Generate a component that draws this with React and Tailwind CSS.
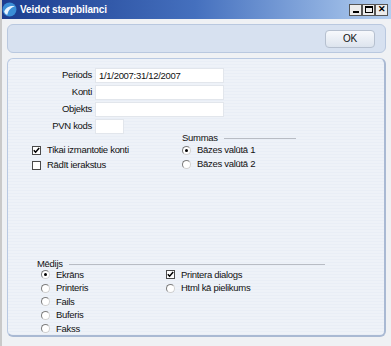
import React from 'react';

const font = { fontFamily: '"Liberation Sans", Arial, sans-serif' };

const Radio = ({ checked }) => (
  <span className="relative inline-block w-[9px] h-[9px] rounded-full bg-white border border-t-[#7d7d7d] border-l-[#7d7d7d] border-b-[#d0d0d0] border-r-[#d0d0d0] shrink-0">
    {checked && <span className="absolute left-[2px] top-[2px] w-[3px] h-[3px] rounded-full bg-black" />}
  </span>
);

const Check = ({ checked }) => (
  <span className="relative inline-flex items-center justify-center w-[9px] h-[9px] bg-white border border-[#4a4a4a] shrink-0">
    {checked && (
      <svg width="7" height="7" viewBox="0 0 7 7">
        <path d="M0.8 3.2 L2.6 5.2 L6.2 1" stroke="#000" strokeWidth="1.5" fill="none" />
      </svg>
    )}
  </span>
);

const Field = ({ label, value, width = 'w-[129px]' }) => (
  <div className="flex items-center h-[17px]">
    <div className="w-[87px] pr-[3px] text-right">{label}</div>
    <div className={`${width} h-[15px] bg-white border border-[#e2e6ec] px-[3px] leading-[13px]`}>{value}</div>
  </div>
);

const Option = ({ type, checked, label, h = 'h-[14px]' }) => (
  <div className={`flex items-center gap-[6px] ${h}`}>
    {type === 'radio' ? <Radio checked={checked} /> : <Check checked={checked} />}
    <span>{label}</span>
  </div>
);

const Header = ({ label, lineWidth, h = 'h-[9px]' }) => (
  <div className={`flex items-center ${h}`}>
    <span>{label}</span>
    <span className={`ml-[6px] h-px bg-[#b8bcc4] ${lineWidth}`} />
  </div>
);

export default function App() {
  return (
    <div className="w-[391px] h-[346px] bg-[#eff1f4] text-[9.5px] tracking-[-0.3px] text-[#111] border-l-[2px] border-[#c9c9c9] overflow-hidden" style={font}>
      <div className="flex items-center h-[19px] bg-gradient-to-r from-[#1c3c8e] via-[#4570be] to-[#b4cff0] -ml-[2px]">
        <svg width="15" height="15" viewBox="0 0 14 14" className="ml-[2px]">
          <circle cx="7" cy="7" r="6.5" fill="#3b8ed6" />
          <path d="M2 9 C4 4 9 3 12 4 C9 5 6 7 5 12 C3.5 11.5 2.5 10.5 2 9 Z" fill="#e8f4ff" />
        </svg>
        <span className="ml-[3px] text-[10px] tracking-[-0.1px] font-bold text-white">Veidot starpbilanci</span>
        <div className="ml-auto mr-[3px] flex">
          {[0, 1, 2].map((i) => (
            <div key={i} className="w-[13px] h-[12px] bg-[#ececec] border border-[#555] flex items-center justify-center text-[9px] leading-none font-bold text-black">
              {i === 0 ? <span className="block w-[6px] h-[2px] bg-black mt-[5px]" /> : i === 1 ? <span className="block w-[8px] h-[7px] border border-black border-t-2" /> : <span>✕</span>}
            </div>
          ))}
        </div>
      </div>

      <div className="px-[5px] pt-[5px]">
        <div className="h-[29px] rounded-[6px] border border-[#b9c8df] bg-[#d7e1f0] flex items-center justify-end pr-[10px]">
          <div className="w-[50px] h-[18px] rounded-[4px] border border-[#b6c0cf] bg-gradient-to-b from-[#f7f9fc] to-[#dde4ee] flex items-center justify-center text-[10px]">OK</div>
        </div>

        <div className="mt-[5px] h-[279px] rounded-[6px] border border-[#b9c9e2] border-r-[2px] border-b-[2px] border-r-[#a9b9d3] border-b-[#a9b9d3] bg-[#eef2f8] bg-[repeating-linear-gradient(180deg,#eef2f8_0px,#eef2f8_2px,#e9eef6_2px,#e9eef6_3px)] pt-[8px]">
          <Field label="Periods" value="1/1/2007:31/12/2007" />
          <Field label="Konti" />
          <Field label="Objekts" />
          <Field label="PVN kods" width="w-[29px]" />

          <div className="flex mt-[-1px]">
            <div className="pl-[24px] w-[174px] pt-[9px]">
              <Option type="check" checked label="Tikai izmantotie konti" h="h-[15px]" />
              <Option type="check" label="Rādīt ierakstus" h="h-[15px]" />
            </div>
            <div>
              <Header label="Summas" lineWidth="w-[72px]" />
              <Option type="radio" checked label="Bāzes valūtā 1" />
              <Option type="radio" label="Bāzes valūtā 2" />
            </div>
          </div>

          <div className="mt-[87px] pl-[29px]">
            <Header label="Mēdijs" lineWidth="w-[256px]" h="h-[8px]" />
            <div className="flex">
              <div className="pl-[4px] w-[129px]">
                <Option type="radio" checked label="Ekrāns" h="h-[13.5px]" />
                <Option type="radio" label="Printeris" h="h-[13.5px]" />
                <Option type="radio" label="Fails" h="h-[13.5px]" />
                <Option type="radio" label="Buferis" h="h-[13.5px]" />
                <Option type="radio" label="Fakss" h="h-[13.5px]" />
              </div>
              <div>
                <Option type="check" checked label="Printera dialogs" h="h-[13.5px]" />
                <Option type="radio" label="Html kā pielikums" h="h-[13.5px]" />
              </div>
            </div>
          </div>
        </div>
      </div>
    </div>
  );
}
